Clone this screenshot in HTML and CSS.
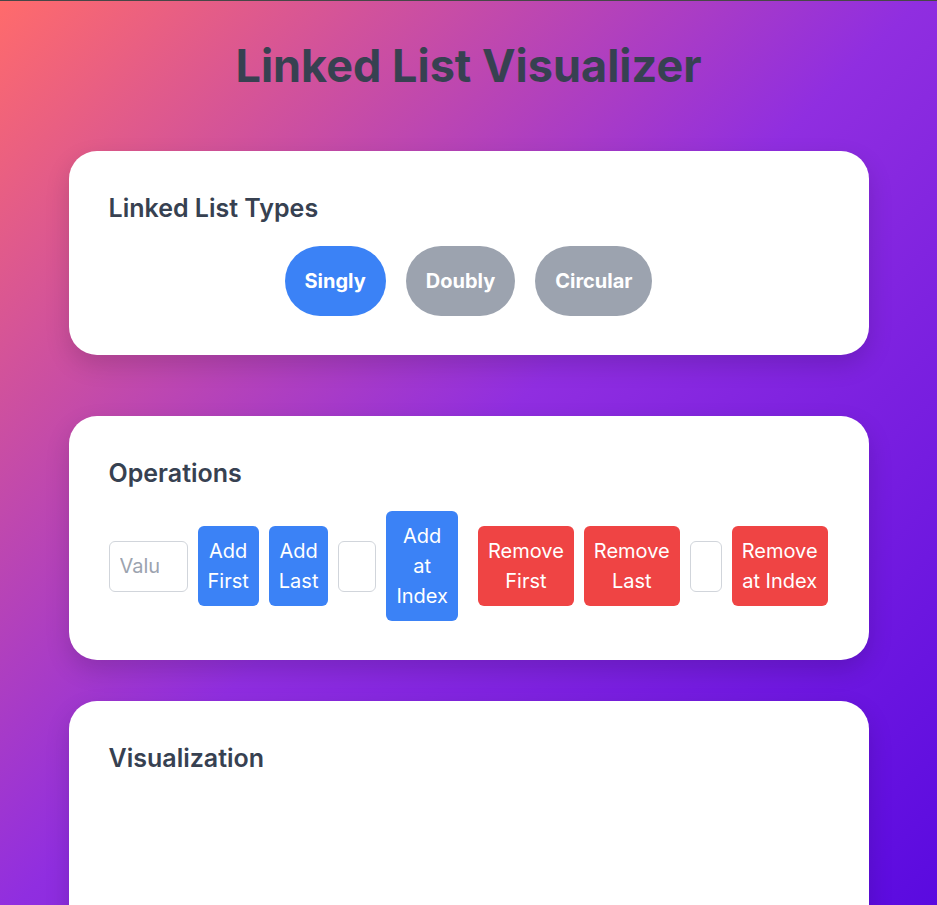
FILE: index.html
```html
<!DOCTYPE html>
<html lang="en">
<head>
<meta charset="UTF-8">
<title>Linked List Visualizer</title>
<link rel="stylesheet" href="styles.css">
</head>
<body>
<div class="app">
  <h1 class="title">Linked List Visualizer</h1>

  <section class="card card-types">
    <h2 class="card-title">Linked List Types</h2>
    <div class="type-row">
      <button class="pill pill-active">Singly</button>
      <button class="pill">Doubly</button>
      <button class="pill">Circular</button>
    </div>
  </section>

  <section class="card card-ops">
    <h2 class="card-title">Operations</h2>
    <div class="ops-row">
      <div class="ops-group">
        <input class="field field-value" type="text" placeholder="Value">
        <button class="op op-add">Add First</button>
        <button class="op op-add">Add Last</button>
        <input class="field field-index" type="text">
        <button class="op op-add">Add at Index</button>
      </div>
      <div class="ops-group">
        <button class="op op-remove">Remove First</button>
        <button class="op op-remove">Remove Last</button>
        <input class="field field-index-sm" type="text">
        <button class="op op-remove">Remove at Index</button>
      </div>
    </div>
  </section>

  <section class="card card-vis">
    <h2 class="card-title">Visualization</h2>
    <div class="vis-area"></div>
  </section>
</div>
</body>
</html>
```

FILE: styles.css
```css
html, body {
  margin: 0;
  padding: 0;
}

body {
  font-family: Inter, "Noto Sans", sans-serif;
  min-height: 100vh;
  border-top: 1px solid #474747;
  background: linear-gradient(135deg, #ff6b6b 0%, #902ee0 50%, #5a0ae0 100%) fixed;
}

.app {
  width: 800px;
  margin: 0 auto;
  padding-top: 37px;
}

.title {
  margin: 0 0 58px;
  text-align: center;
  font-size: 45px;
  font-weight: 700;
  line-height: normal;
  color: #374151;
}

.card {
  background: #ffffff;
  border-radius: 28px;
  padding: 40px 40px 39px;
  box-shadow: 0 10px 25px rgba(0, 0, 0, 0.15);
}

.card-types {
  margin-bottom: 61px;
}

.card-ops {
  margin-bottom: 41px;
}

.card-title {
  margin: 2px 0 23px;
  font-size: 25px;
  font-weight: 600;
  line-height: normal;
  color: #374151;
}

.type-row {
  display: flex;
  justify-content: center;
  gap: 20px;
}

.pill {
  height: 70px;
  padding: 0 20px;
  border: none;
  border-radius: 35px;
  background: #9ca3af;
  color: #ffffff;
  font-family: inherit;
  font-size: 20px;
  font-weight: 700;
}

.pill-active {
  background: #3b82f6;
}

.ops-row {
  display: flex;
  align-items: center;
  gap: 20px;
}

.ops-group {
  display: flex;
  align-items: center;
  gap: 10px;
}

.op {
  width: min-content;
  padding: 10px;
  border: none;
  border-radius: 6px;
  color: #ffffff;
  font-family: inherit;
  font-size: 20px;
  font-weight: 400;
  line-height: 30px;
}

.op-add {
  background: #3b82f6;
}

.op-remove {
  background: #ef4444;
}

.field {
  box-sizing: border-box;
  height: 51px;
  padding: 10px;
  border: 1px solid #d1d5db;
  border-radius: 6px;
  font-family: inherit;
  font-size: 20px;
  color: #374151;
  background: #ffffff;
}

.field::placeholder {
  color: #9ca3af;
}

.field-value {
  width: 79px;
  padding-right: 28px;
}

.field-index {
  width: 38px;
}

.field-index-sm {
  width: 32px;
}

.vis-area {
  min-height: 300px;
}
```
